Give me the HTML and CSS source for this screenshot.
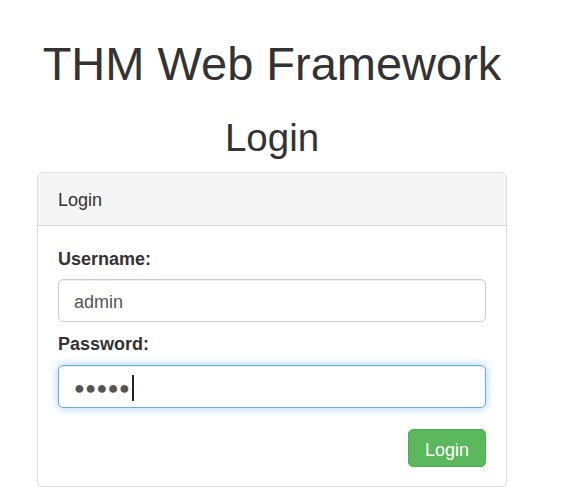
FILE: index.html
```html
<!DOCTYPE html>
<html>

	<head>
		<meta charset="UTF-8">
		<title>Login</title>
		<link rel="stylesheet" href="styles.css">
	</head>

	<body>
		<div id="wrap">
			<h1 class="title">THM Web Framework</h1>
			<h2 class="subtitle">Login</h2>
			<div class="panel">
				<div class="panel-heading">Login</div>
				<form class="panel-body" action="javascript:;">
					<label class="field-label" for="username">Username:</label>
					<input class="field" id="username" type="text" value="admin">
					<label class="field-label" for="password">Password:</label>
					<div class="field field-focus" id="password"><span class="dots">●●●●●</span><span class="caret"></span></div>
					<div class="actions">
						<button class="btn-login" type="submit">Login</button>
					</div>
				</form>
			</div>
		</div>
	</body>

</html>
```

FILE: styles.css
```css
html,
body {
	margin: 0;
	background: #fff;
}

body {
	font-family: "Liberation Sans", Arial, sans-serif;
	color: #333;
}

#wrap {
	width: 470px;
	padding: 38px 0 0 37px;
	text-align: center;
}

.title {
	font-size: 47px;
	line-height: 1.1;
	font-weight: normal;
	margin: 0 0 27px;
}

.subtitle {
	font-size: 38.5px;
	line-height: 1.1;
	font-weight: normal;
	margin: 0 0 13px;
}

.panel {
	text-align: left;
	border: 1px solid #ddd;
	border-radius: 5px;
	background: #fff;
	box-shadow: 0 1px 1px rgba(0, 0, 0, .05);
}

.panel-heading {
	background: #f5f5f5;
	border-bottom: 1px solid #ddd;
	border-radius: 4px 4px 0 0;
	padding: 15px 20px 12px;
	font-size: 18px;
	line-height: 25px;
}

.panel-body {
	display: flex;
	flex-direction: column;
	padding: 19px 20px 19px;
	margin: 0;
}

.field-label {
	font-weight: bold;
	font-size: 18px;
	line-height: 25px;
	padding-top: 2px;
	margin-bottom: 7px;
}

.field {
	box-sizing: border-box;
	height: 43px;
	width: 100%;
	margin: 0 0 8px;
	padding: 3px 15px 0;
	border: 1px solid #ccc;
	border-radius: 5px;
	font: 18px/38px "Liberation Sans", Arial, sans-serif;
	color: #555;
	background: #fff;
	box-shadow: inset 0 1px 1px rgba(0, 0, 0, .075);
	outline: none;
}

.field-focus {
	display: flex;
	align-items: center;
	padding-top: 0;
	margin-top: 1px;
	border-color: #66afe9;
	box-shadow: inset 0 1px 1px rgba(0, 0, 0, .075), 0 0 10px rgba(102, 175, 233, .6);
}

.dots {
	letter-spacing: 0.4px;
	font-size: 18px;
	margin-top: 2px;
}

.caret {
	width: 1.5px;
	height: 26px;
	margin-left: 2px;
	margin-top: 2px;
	background: #222;
}

.actions {
	display: flex;
	justify-content: flex-end;
	margin-top: 13px;
}

.btn-login {
	font: 18px/24px "Liberation Sans", Arial, sans-serif;
	color: #fff;
	background: #5cb85c;
	border: 1px solid #4cae4c;
	border-radius: 5px;
	padding: 8px 16px 4px;
	cursor: pointer;
}
```
